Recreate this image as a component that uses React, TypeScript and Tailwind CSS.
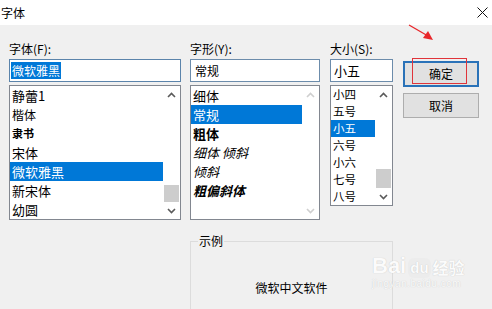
import React from "react";

type Item = { label: string; cls?: string };

const Chevron = ({ dir, dim }: { dir: "up" | "down"; dim?: boolean }) => (
  <svg
    width="9"
    height="6"
    viewBox="0 0 9 6"
    className={dim ? "text-[#cfcfcf]" : "text-[#5a5a5a]"}
  >
    <path
      d={dir === "up" ? "M1 5L4.5 1.5L8 5" : "M1 1L4.5 4.5L8 1"}
      fill="none"
      stroke="currentColor"
      strokeWidth="1.6"
    />
  </svg>
);

interface ListBoxProps {
  items: Item[];
  selected: number;
  rowClass: string;
  boxClass: string;
  listClass: string;
  thumbClass?: string;
  dim?: boolean;
}

const ListBox: React.FC<ListBoxProps> = ({
  items,
  selected,
  rowClass,
  boxClass,
  listClass,
  thumbClass,
  dim,
}) => (
  <div className={`flex border border-[#828790] bg-white ${boxClass}`}>
    <div className={`flex-1 flex flex-col overflow-hidden ${listClass}`}>
      {items.map((it, i) => (
        <div
          key={it.label}
          className={`flex items-center pl-[2px] whitespace-nowrap overflow-hidden ${rowClass} ${
            i === selected ? "bg-[#0078d7] text-white" : "text-black"
          }`}
        >
          <span className={`block leading-[15px] ${it.cls ?? ""}`}>{it.label}</span>
        </div>
      ))}
    </div>
    {/* scrollbar */}
    <div className="w-[17px] flex flex-col bg-white">
      <div className="h-[17px] flex items-center justify-center">
        <Chevron dir="up" dim={dim} />
      </div>
      <div className="flex-1 flex flex-col justify-end items-center">
        {thumbClass && <div className={`w-[15px] bg-[#cdcdcd] ${thumbClass}`} />}
      </div>
      <div className="h-[17px] flex items-center justify-center">
        <Chevron dir="down" dim={dim} />
      </div>
    </div>
  </div>
);

const fontItems: Item[] = [
  { label: "静蕾1" },
  { label: "楷体", cls: "text-[12px]" },
  { label: "隶书", cls: "text-[11px] font-bold" },
  { label: "宋体" },
  { label: "微软雅黑" },
  { label: "新宋体" },
  { label: "幼圆" },
];

const styleItems: Item[] = [
  { label: "细体" },
  { label: "常规" },
  { label: "粗体", cls: "font-bold" },
  { label: "细体 倾斜", cls: "italic" },
  { label: "倾斜", cls: "italic" },
  { label: "粗偏斜体", cls: "font-bold italic" },
];

const sizeItems: Item[] = [
  { label: "小四" },
  { label: "五号" },
  { label: "小五" },
  { label: "六号" },
  { label: "小六" },
  { label: "七号" },
  { label: "八号" },
];

export default function App() {
  return (
    <div className="relative w-[492px] h-[309px] overflow-hidden bg-[#f0f0f0] font-['Noto_Sans_CJK_SC',sans-serif] text-black">
      {/* title bar */}
      <div className="h-[25px] bg-white flex items-center justify-between pl-[1px] pr-[4px]">
        <span className="text-[12px] leading-[14px]">字体</span>
        <svg width="11" height="11" viewBox="0 0 11 11">
          <path d="M0.5 0.5L10.5 10.5M10.5 0.5L0.5 10.5" stroke="#111" strokeWidth="1" />
        </svg>
      </div>

      {/* body */}
      <div className="flex pl-[9px] pt-[16px]">
        {/* font column */}
        <div className="w-[172px] flex flex-col">
          <div className="text-[12px] leading-[16px] h-[16px] mb-[2px]">字体(F):</div>
          <div className="h-[23px] border border-[#5b84ab] bg-white flex items-center pl-[1px]">
            <span className="bg-[#0078d7] text-white text-[12px] leading-[17px] px-[1px]">
              微软雅黑
            </span>
          </div>
          <ListBox
            items={fontItems}
            selected={4}
            rowClass="h-[19px] text-[13px]"
            boxClass="mt-[3px] h-[135px]"
            listClass="justify-end"
            thumbClass="h-[17px]"
          />
        </div>

        {/* style + size + sample */}
        <div className="ml-[9px] flex flex-col">
          <div className="flex">
            <div className="w-[130px] flex flex-col">
              <div className="text-[12px] leading-[16px] h-[16px] mb-[2px]">字形(Y):</div>
              <div className="h-[23px] border border-[#6c8cab] bg-white flex items-center pl-[4px] text-[12px]">
                常规
              </div>
              <ListBox
                items={styleItems}
                selected={1}
                rowClass="h-[19px] text-[13px]"
                boxClass="mt-[3px] h-[135px]"
                listClass="justify-start"
                dim
              />
            </div>
            <div className="ml-[10px] w-[63px] flex flex-col">
              <div className="text-[12px] leading-[16px] h-[16px] mb-[2px]">大小(S):</div>
              <div className="h-[23px] border border-[#6c8cab] bg-white flex items-center pl-[3px] text-[13px]">
                小五
              </div>
              <ListBox
                items={sizeItems}
                selected={2}
                rowClass="h-[17px] text-[11.5px]"
                boxClass="mt-[3px] h-[121px]"
                listClass="justify-start"
                thumbClass="h-[19px]"
              />
            </div>
          </div>

          {/* sample group */}
          <fieldset className="mt-[14px] w-[203px] h-[90px] border border-[#dcdcdc] flex flex-col items-center">
            <legend className="ml-[7px] px-[1px] text-[12px] leading-[14px]">示例</legend>
            <div className="mt-[33px] text-[12px] leading-[14px]">微软中文软件</div>
          </fieldset>
        </div>

        {/* buttons */}
        <div className="ml-[10px] mt-[20px] w-[76px] flex flex-col gap-[6px]">
          <button className="h-[26px] border-2 border-[#2a72b8] bg-[#e1e1e1] text-[12px] leading-[14px]">
            确定
          </button>
          <button className="h-[25px] border border-[#adadad] bg-[#e1e1e1] text-[12px] leading-[14px]">
            取消
          </button>
        </div>
      </div>

      {/* annotation: red arrow */}
      <svg
        className="absolute left-[404px] top-[20px]"
        width="34"
        height="24"
        viewBox="0 0 34 24"
      >
        <path d="M5 5L24 16" stroke="#e8262a" strokeWidth="1.3" />
        <path d="M29 20L19 18L24 11Z" fill="#e8262a" />
      </svg>

      {/* annotation: red box */}
      <div className="absolute left-[412px] top-[58px] w-[55px] h-[26px] border border-[#e0343a]" />

      {/* watermark */}
      <div className="absolute left-[372px] top-[254px] flex flex-col items-start text-[#fbfbfb] [text-shadow:0_0_1px_#bdbdbd] font-['Liberation_Sans',sans-serif]">
        <div className="flex items-end gap-[2px]">
          <span className="text-[22px] font-bold leading-[24px]">Bai</span>
          <span className="text-[15px] font-bold leading-[20px] rounded-[6px] px-[2px] bg-[#ececec]">
            du
          </span>
          <span className="text-[16px] leading-[22px] font-['Noto_Sans_CJK_SC',sans-serif] font-bold">
            经验
          </span>
        </div>
        <span className="text-[10px] leading-[12px] tracking-[0.5px]">jingyan.baidu.com</span>
      </div>
    </div>
  );
}
